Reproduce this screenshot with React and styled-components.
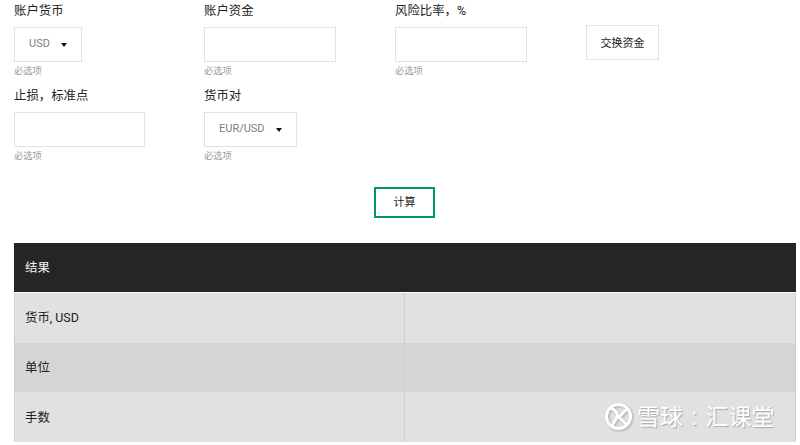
import React from "react";
import styled, { createGlobalStyle } from "styled-components";

const Global = createGlobalStyle`
  html, body { margin: 0; padding: 0; background: #fff; }
  body { font-family: Roboto, "Noto Sans CJK SC", sans-serif; overflow: hidden; }
`;
const Page = styled.div`
  position: relative;
  width: 800px;
  height: 445px;
  overflow: hidden;
  padding: 0 4px 0 14px;
  box-sizing: border-box;
`;
const FormRow = styled.div`
  display: flex;
  height: ${(p) => p.$h}px;
`;
const Field = styled.div`
  width: ${(p) => p.$w}px;
  flex: none;
  display: flex;
  flex-direction: column;
  align-items: flex-start;
`;
const Label = styled.label`
  font: 12.4px/22px Roboto, "Noto Sans CJK SC", sans-serif;
  color: #222;
  height: 27px;
  display: block;
`;
const Input = styled.div`
  width: ${(p) => p.$w}px;
  height: 35px;
  box-sizing: border-box;
  border: 1px solid #e2e2e2;
  background: #fff;
`;
const Select = styled.div`
  width: ${(p) => p.$w}px;
  height: 35px;
  box-sizing: border-box;
  border: 1px solid #e2e2e2;
  display: flex;
  align-items: center;
  padding: 0 14px;
  justify-content: space-between;
  font: 11px/1 Roboto, sans-serif;
  color: #7d7d7d;
  span:first-child { margin-top: -2px; }
`;
const Caret = styled.span`
  width: 0;
  height: 0;
  border-left: 3.5px solid transparent;
  border-right: 3.5px solid transparent;
  border-top: 4px solid #111;
  margin-top: 1px;
`;
const Hint = styled.div`
  font: 9.3px/12px Roboto, "Noto Sans CJK SC", sans-serif;
  color: #9a9a9a;
  margin-top: 3px;
`;
const ExchangeButton = styled.button`
  width: 73px;
  height: 35px;
  margin: 25px 0 0 0;
  box-sizing: border-box;
  border: 1px solid #e2e2e2;
  background: #fff;
  padding: 1px 0 0;
  font: 11px/1 Roboto, "Noto Sans CJK SC", sans-serif;
  color: #222;
`;
const CalcRow = styled.div`
  display: flex;
  justify-content: center;
  padding: 2px 0 0 0;
`;
const CalcButton = styled.button`
  width: 61px;
  height: 31px;
  margin-left: -1px;
  box-sizing: border-box;
  border: 2px solid #009a63;
  background: #fff;
  padding: 0;
  font: 11px/1 Roboto, "Noto Sans CJK SC", sans-serif;
  color: #222;
`;
const Table = styled.div`
  width: 782px;
  margin-top: 25px;
`;
const Header = styled.div`
  height: 49px;
  background: #252525;
  color: #f2f2f2;
  font: 12.4px/50px Roboto, "Noto Sans CJK SC", sans-serif;
  padding-left: 11px;
  border-bottom: 1px solid #fff;
`;
const Row = styled.div`
  display: grid;
  grid-template-columns: 390px 1fr;
  height: ${(p) => p.$h}px;
  background: ${(p) => (p.$alt ? "#d5d5d5" : "#e1e1e1")};
  box-shadow: inset 1px 0 #d0d0d0, inset -1px 0 #d0d0d0;
`;
const Cell = styled.div`
  display: flex;
  align-items: center;
  padding-left: 11px;
  padding-top: ${(p) => (p.$low ? 2 : 0)}px;
  font: 12.4px/1 Roboto, "Noto Sans CJK SC", sans-serif;
  color: #222;
  & + & { border-left: 1px solid #cfcfcf; }
`;
const Watermark = styled.div`
  position: absolute;
  left: 604px;
  top: 402px;
  display: flex;
  align-items: center;
  gap: 4px;
  color: #fff;
  font: 23px/1 "Noto Sans CJK SC", sans-serif;
  text-shadow: 1px 1px 1px #a8a8a8;
  white-space: nowrap;
`;
const Colon = styled.span`
  font-family: "Liberation Sans", sans-serif;
  margin: 0 8px;
`;
const Logo = () => (
  <svg width="29" height="29" viewBox="0 0 29 29" fill="none" style={{ filter: "drop-shadow(1px 1px 1px #a8a8a8)" }}>
    <circle cx="14.5" cy="14.5" r="12" stroke="#fff" strokeWidth="3" />
    <path d="M7 6C13 9 15 13 12 17L8 24" stroke="#fff" strokeWidth="3" />
    <path d="M23 7L15 15L23 23" stroke="#fff" strokeWidth="3" />
  </svg>
);

export default function App() {
  return (
    <Page>
      <Global />
      <FormRow $h={85}>
        <Field $w={190}>
          <Label>账户货币</Label>
          <Select $w={68}><span>USD</span><Caret /></Select>
          <Hint>必选项</Hint>
        </Field>
        <Field $w={191}>
          <Label>账户资金</Label>
          <Input $w={132} />
          <Hint>必选项</Hint>
        </Field>
        <Field $w={191}>
          <Label>风险比率，%</Label>
          <Input $w={132} />
          <Hint>必选项</Hint>
        </Field>
        <ExchangeButton>交换资金</ExchangeButton>
      </FormRow>
      <FormRow $h={100}>
        <Field $w={190}>
          <Label>止损，标准点</Label>
          <Input $w={131} />
          <Hint>必选项</Hint>
        </Field>
        <Field $w={191}>
          <Label>货币对</Label>
          <Select $w={93}><span>EUR/USD</span><Caret /></Select>
          <Hint>必选项</Hint>
        </Field>
      </FormRow>
      <CalcRow>
        <CalcButton>计算</CalcButton>
      </CalcRow>
      <Table>
        <Header>结果</Header>
        <Row $h={50}><Cell>货币, USD</Cell><Cell /></Row>
        <Row $h={49} $alt><Cell $low>单位</Cell><Cell /></Row>
        <Row $h={50}><Cell $low>手数</Cell><Cell /></Row>
      </Table>
      <Watermark><Logo /><span>雪球<Colon>:</Colon>汇课堂</span></Watermark>
    </Page>
  );
}
